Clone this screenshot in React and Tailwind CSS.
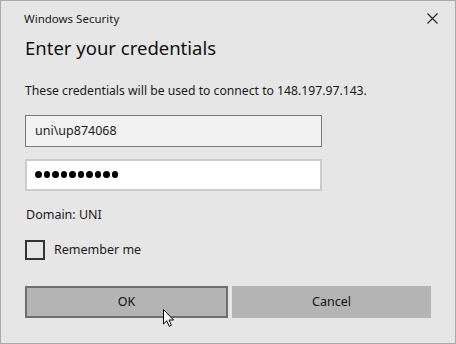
import { useState } from "react";

const font = { fontFamily: '"Segoe UI", "Noto Sans", "Open Sans", sans-serif' };

const Cursor = () => (
  <svg
    className="absolute left-[161px] top-[307px] pointer-events-none"
    width="13"
    height="20"
    viewBox="0 0 13 20"
  >
    <path
      d="M1.5 1.5 L1.5 16 L4.8 12.8 L7.2 18.3 L9.4 17.3 L7.1 12 L11.6 12 Z"
      fill="#fff"
      stroke="#000"
      strokeWidth="1"
      strokeLinejoin="miter"
    />
  </svg>
);

const App = () => {
  const [user, setUser] = useState("uni\\up874068");
  const [remember, setRemember] = useState(false);

  return (
    <div
      className="relative w-[456px] h-[344px] bg-[#e6e6e6] border border-[#a9a9a9] text-[#1a1a1a] overflow-hidden"
      style={font}
    >
      {/* title bar */}
      <div className="flex items-center justify-between pl-[23px] pr-[17px] pt-[9px] h-[26px]">
        <span className="text-[11.5px] leading-none">Windows Security</span>
        <svg width="11" height="11" viewBox="0 0 11 11">
          <path d="M0.5 0.5 L10.5 10.5 M10.5 0.5 L0.5 10.5" stroke="#222" strokeWidth="1.1" />
        </svg>
      </div>

      <div className="pl-[24px] pr-[24px]">
        <h1 className="text-[18.5px] leading-none mt-[12px] text-[#111]">Enter your credentials</h1>

        <p className="text-[12.2px] leading-none mt-[27px]">
          These credentials will be used to connect to 148.197.97.143.
        </p>

        {/* fields */}
        <div className="mt-[18px] flex flex-col gap-[12px] w-[297px]">
          <input
            value={user}
            onChange={(e) => setUser(e.target.value)}
            className="h-[32px] bg-[#f2f2f2] border border-[#7a7a7a] px-[9px] text-[12.5px] text-[#1a1a1a] outline-none"
            style={font}
          />
          <div className="h-[32px] bg-white border-2 border-[#cccccc] flex items-center pl-[8px] gap-[2px]">
            {Array.from({ length: 10 }).map((_, i) => (
              <span key={i} className="w-[6.5px] h-[6.5px] rounded-full bg-black" />
            ))}
          </div>
        </div>

        <div className="text-[12.5px] leading-none mt-[18px] pl-[1px]">Domain: UNI</div>

        {/* remember */}
        <label className="flex items-center gap-[9px] mt-[19px] cursor-default">
          <button
            onClick={() => setRemember(!remember)}
            className="w-[20px] h-[20px] border-2 border-[#333] bg-transparent"
          />
          <span className="text-[12.5px] leading-none">Remember me</span>
        </label>

        {/* buttons */}
        <div className="flex gap-[4px] mt-[26px] w-[406px]">
          <button className="flex-1 h-[32px] bg-[#b4b4b4] border-2 border-[#6e6e6e] text-[12.5px] text-[#111]">
            OK
          </button>
          <button className="flex-1 h-[32px] bg-[#b4b4b4] text-[12.5px] text-[#111]">
            Cancel
          </button>
        </div>
      </div>

      <Cursor />
    </div>
  );
};

export default App;
